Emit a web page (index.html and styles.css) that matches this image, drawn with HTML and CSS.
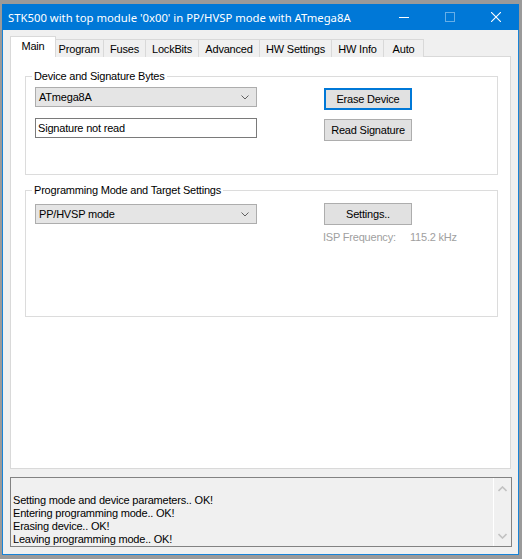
FILE: index.html
```html
<!DOCTYPE html>
<html>
<head>
<meta charset="utf-8">
<link rel="stylesheet" href="styles.css">
</head>
<body>
<div class="window">
  <div class="titlebar">
    <span class="title">STK500 with top module '0x00' in PP/HVSP mode with ATmega8A</span>
    <div class="caption">
      <div class="cbtn"><svg width="10" height="10" viewBox="0 0 10 10"><path d="M0 5.5H10" stroke="#fff" stroke-width="1"/></svg></div>
      <div class="cbtn"><svg width="10" height="10" viewBox="0 0 10 10"><rect x="0.5" y="0.5" width="9" height="9" fill="none" stroke="#fff" stroke-opacity="0.4" stroke-width="1"/></svg></div>
      <div class="cbtn"><svg width="10" height="10" viewBox="0 0 10 10"><path d="M0 0L10 10M10 0L0 10" stroke="#fff" stroke-width="1.1"/></svg></div>
    </div>
  </div>
  <div class="client">
    <div class="tabs">
      <div class="tab active w-main">Main</div>
      <div class="tab w-program">Program</div>
      <div class="tab w-fuses">Fuses</div>
      <div class="tab w-lock">LockBits</div>
      <div class="tab w-adv">Advanced</div>
      <div class="tab w-hws">HW Settings</div>
      <div class="tab w-hwi">HW Info</div>
      <div class="tab w-auto">Auto</div>
    </div>
    <div class="panel">
      <fieldset class="group g1">
        <legend>Device and Signature Bytes</legend>
        <div class="grid">
          <div class="combo"><span>ATmega8A</span><svg class="chev" width="8" height="5" viewBox="0 0 8 5"><path d="M0.5 0.5L4 4L7.5 0.5" fill="none" stroke="#606060" stroke-width="1"/></svg></div>
          <div class="btn focused">Erase Device</div>
          <div class="textbox">Signature not read</div>
          <div class="btn">Read Signature</div>
        </div>
      </fieldset>
      <fieldset class="group g2">
        <legend>Programming Mode and Target Settings</legend>
        <div class="grid">
          <div class="combo"><span>PP/HVSP mode</span><svg class="chev" width="8" height="5" viewBox="0 0 8 5"><path d="M0.5 0.5L4 4L7.5 0.5" fill="none" stroke="#606060" stroke-width="1"/></svg></div>
          <div class="btncol">
            <div class="btn">Settings..</div>
            <div class="freq"><span class="flabel">ISP Frequency:</span><span>115.2 kHz</span></div>
          </div>
        </div>
      </fieldset>
    </div>
    <div class="log">
      <div class="logtext">
        <div>Setting mode and device parameters.. OK!</div>
        <div>Entering programming mode.. OK!</div>
        <div>Erasing device.. OK!</div>
        <div>Leaving programming mode.. OK!</div>
      </div>
      <div class="vscroll">
        <svg width="9" height="6" viewBox="0 0 9 6"><path d="M0.5 5L4.5 1L8.5 5" fill="none" stroke="#c2c2c2" stroke-width="1.6"/></svg>
        <svg width="9" height="6" viewBox="0 0 9 6"><path d="M0.5 1L4.5 5L8.5 1" fill="none" stroke="#c2c2c2" stroke-width="1.6"/></svg>
      </div>
    </div>
  </div>
</div>
</body>
</html>
```
FILE: styles.css
```css
html, body {
  margin: 0;
  padding: 0;
}
body {
  background: #9a9a9a;
  width: 522px;
  height: 559px;
  overflow: hidden;
  font-family: "Liberation Sans", Arial, sans-serif;
  font-size: 11px;
  letter-spacing: -0.2px;
  color: #000;
}
.window {
  margin: 4px 0 0 2px;
  width: 517px;
  height: 551px;
  box-sizing: border-box;
  border: 1px solid #1883d7;
  border-top: none;
  background: #f0f0f0;
  display: flex;
  flex-direction: column;
}
.titlebar {
  height: 26px;
  background: #0078d7;
  display: flex;
  align-items: center;
  justify-content: space-between;
  color: #fff;
  margin: 0 -1px;
  padding-left: 6px;
}
.title {
  font-family: "Noto Sans", sans-serif;
  font-size: 11.3px;
  letter-spacing: 0;
  white-space: nowrap;
}
.caption {
  display: flex;
  height: 26px;
}
.cbtn {
  width: 46px;
  height: 26px;
  display: flex;
  align-items: center;
  justify-content: center;
}
.client {
  flex: 1;
  padding: 7px 0 0 7px;
  display: flex;
  flex-direction: column;
}
.tabs {
  display: flex;
  align-items: flex-end;
  height: 20px;
  position: relative;
  z-index: 1;
  margin-bottom: -1px;
}
.tab {
  box-sizing: border-box;
  height: 18px;
  border: 1px solid #d9d9d9;
  border-bottom: none;
  margin-left: -1px;
  background: #f0f0f0;
  text-align: center;
  line-height: 17px;
  padding-top: 1px;
}
.tab.active {
  height: 21px;
  background: #fff;
  line-height: 17px;
  padding-top: 1px;
  margin-right: -1px;
  position: relative;
  z-index: 2;
  margin-left: 0;
}
.w-main { width: 46px; }
.w-program { width: 50px; }
.w-fuses { width: 43px; }
.w-lock { width: 54px; }
.w-adv { width: 62px; }
.w-hws { width: 73px; }
.w-hwi { width: 53px; }
.w-auto { width: 41px; }
.panel {
  box-sizing: border-box;
  width: 501px;
  height: 413px;
  background: #fff;
  border: 1px solid #d9d9d9;
  padding: 13px 0 0 14px;
}
.group {
  margin: 0;
  padding: 4px 0 33px 9px;
  border: 1px solid #dcdcdc;
  width: 473px;
  box-sizing: border-box;
  min-width: 0;
}
.group legend {
  padding: 0 2px;
  margin-left: -3px;
  line-height: 13px;
}
.g2 {
  margin-top: 9px;
  padding-top: 6px;
  padding-bottom: 73px;
}
.grid {
  display: grid;
  grid-template-columns: 222px 88px;
  column-gap: 67px;
  row-gap: 8px;
  align-items: start;
}
.combo {
  box-sizing: border-box;
  height: 20px;
  background: #e5e5e5;
  border: 1px solid #adadad;
  display: flex;
  align-items: center;
  justify-content: space-between;
  padding: 0 7px 0 3px;
}
.g2 .combo {
  margin-top: 1px;
}
.textbox {
  box-sizing: border-box;
  height: 20px;
  background: #fff;
  border: 1px solid #7a7a7a;
  line-height: 18px;
  padding-left: 2px;
}
.btn {
  box-sizing: border-box;
  height: 22px;
  margin-top: 1px;
  background: #e1e1e1;
  border: 1px solid #adadad;
  text-align: center;
  line-height: 20px;
}
.btn.focused {
  border: 2px solid #0078d7;
  line-height: 18px;
}
.btncol .btn {
  margin-top: 0;
}
.freq {
  display: flex;
  color: #a0a0a0;
  margin-top: 6px;
  margin-left: -1px;
  white-space: nowrap;
}
.flabel {
  width: 87px;
  flex-shrink: 0;
}
.log {
  margin-top: 8px;
  width: 502px;
  height: 70px;
  box-sizing: border-box;
  border: 1px solid #828282;
  display: flex;
  background: #f0f0f0;
}
.logtext {
  flex: 1;
  display: flex;
  flex-direction: column;
  justify-content: flex-end;
  padding-left: 2px;
  line-height: 13px;
  white-space: nowrap;
}
.vscroll {
  width: 17px;
  border-left: 1px solid #fff;
  display: flex;
  flex-direction: column;
  justify-content: space-between;
  align-items: center;
  padding: 8px 0 7px;
}
.vscroll svg {
  display: block;
}
```
